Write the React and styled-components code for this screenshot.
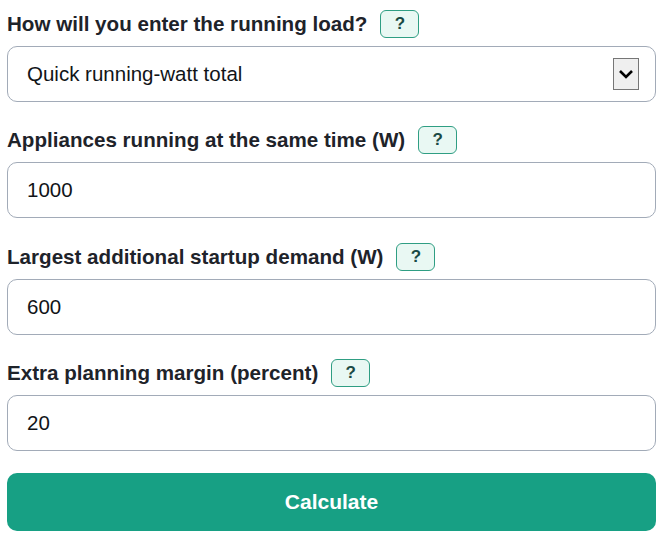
import React from 'react';
import styled, { createGlobalStyle } from 'styled-components';

const GlobalStyle = createGlobalStyle`
  html, body {
    margin: 0;
    padding: 0;
    background: #ffffff;
  }
  body {
    font-family: "Liberation Sans", Arial, sans-serif;
    color: #1f2328;
  }
`;

const Form = styled.form`
  display: flex;
  flex-direction: column;
  padding: 10px 7px 0;
`;

const Field = styled.div`
  display: flex;
  flex-direction: column;

  & + & {
    margin-top: 24.4px;
  }
`;

const LabelRow = styled.div`
  display: flex;
  align-items: center;
  gap: 13px;
  height: 28px;
  margin-bottom: 8px;
`;

const Label = styled.label`
  font-size: 20.6px;
  font-weight: 700;
  color: #1e232a;
`;

const HelpButton = styled.button`
  width: 39px;
  height: 28px;
  padding: 0;
  border: 1.5px solid #2f9e83;
  border-radius: 6px;
  background: #e9f8f3;
  color: #1a4a44;
  font-family: "Liberation Sans", Arial, sans-serif;
  font-size: 17px;
  font-weight: 700;
  cursor: pointer;
`;

const Box = styled.div`
  display: flex;
  align-items: center;
  justify-content: space-between;
  box-sizing: border-box;
  height: 56px;
  padding: 0 16px 0 19px;
  border: 1.5px solid #a2abb8;
  border-radius: 10px;
  background: #ffffff;
  font-size: 20.5px;
  color: #111418;
`;

const Value = styled.span`
  line-height: 1;
`;

const ArrowBox = styled.span`
  display: flex;
  align-items: center;
  justify-content: center;
  width: 24px;
  height: 30px;
  background: #efefef;
  border: 1px solid #767676;
`;

const Submit = styled.button`
  height: 58px;
  margin-top: 22px;
  border: none;
  border-radius: 10px;
  background: #17a084;
  color: #ffffff;
  font-family: "Liberation Sans", Arial, sans-serif;
  font-size: 21px;
  font-weight: 700;
  cursor: pointer;
`;

const fields = [
  { label: 'Appliances running at the same time (W)', value: '1000' },
  { label: 'Largest additional startup demand (W)', value: '600' },
  { label: 'Extra planning margin (percent)', value: '20' },
];

function Chevron() {
  return (
    <svg width="16" height="10" viewBox="0 0 16 10">
      <path d="M2 2 L8 8 L14 2" fill="none" stroke="#000" strokeWidth="2.6" />
    </svg>
  );
}

export default function App() {
  return (
    <>
      <GlobalStyle />
      <Form onSubmit={(e) => e.preventDefault()}>
        <Field>
          <LabelRow>
            <Label>How will you enter the running load?</Label>
            <HelpButton type="button">?</HelpButton>
          </LabelRow>
          <Box>
            <Value>Quick running-watt total</Value>
            <ArrowBox>
              <Chevron />
            </ArrowBox>
          </Box>
        </Field>
        {fields.map((f) => (
          <Field key={f.label}>
            <LabelRow>
              <Label>{f.label}</Label>
              <HelpButton type="button">?</HelpButton>
            </LabelRow>
            <Box>
              <Value>{f.value}</Value>
            </Box>
          </Field>
        ))}
        <Submit type="submit">Calculate</Submit>
      </Form>
    </>
  );
}
